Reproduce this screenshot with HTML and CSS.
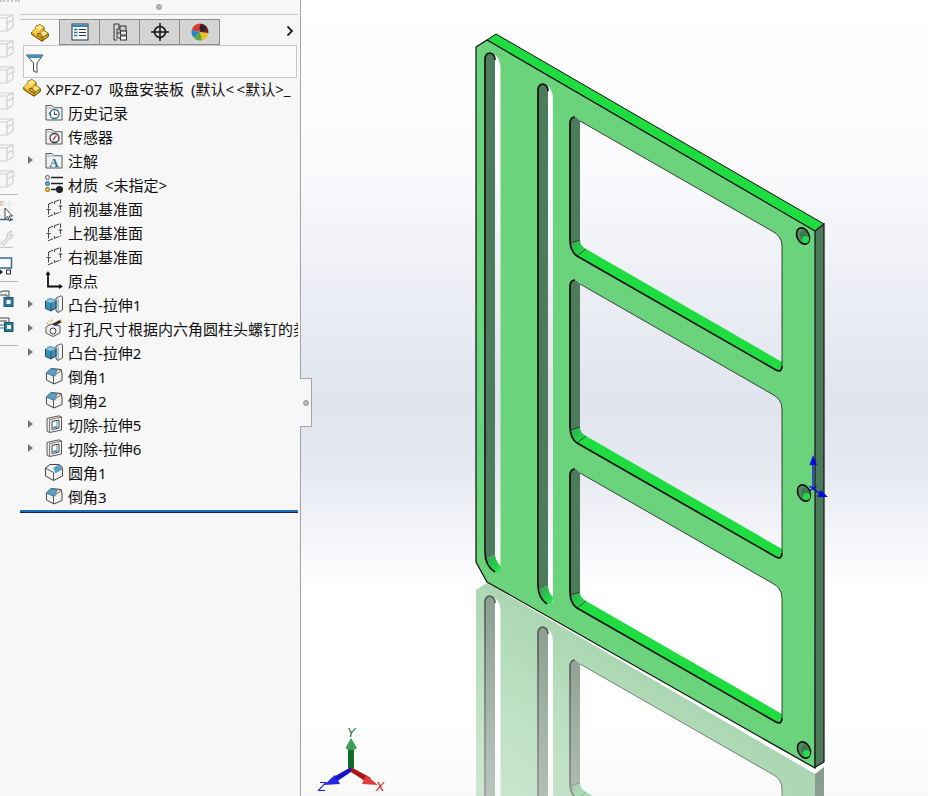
FILE: index.html
```html
<!DOCTYPE html>
<html lang="en">
<head>
  <meta charset="UTF-8">
  <title>XPFZ-07 吸盘安装板</title>
  <link rel="stylesheet" href="styles.css">
</head>
<body>
  <!-- Shared icons -->
  <svg class="defs" width="0" height="0">
    <defs>
      <symbol id="i-part" viewBox="0 0 18 18">
        <path d="M.7 8 5 4V2L9 .7 13 3V6.500L17.300 9.500V12.500L11 17.300.7 10.500Z" fill="#e6aa14" stroke="#5a460a"/>
        <path d="M.7 8 5 4V2L9 .7 13 3 6.500 9.500 6.500 11.500Z" fill="#f5cf55"/>
        <path d="M5 3.500 9 1.500 12 3.300 8.500 6.500Z" fill="#fbe68f"/>
        <path d="M9.500 9.500 13 6.800 16.800 9.600 12 13.200Z" fill="#fbe68f"/>
        <path d="M6.500 9.500V11.500L11 14V17M11 14 17 9.800M6.500 9.500 9.500 9.500 12 13.200" stroke="#5a460a" stroke-width=".8" fill="none"/>
      </symbol>
      <symbol id="i-folder" viewBox="0 0 18 18">
        <path d="M1 4.500V2.500h6l2 2h8V17H1Z" fill="#f1f1f1" stroke="#555"/>
        <path d="M1.500 5h15" stroke="#aaa"/>
      </symbol>
      <symbol id="i-plane" viewBox="0 0 18 18">
        <path d="M3.500 5V18M15.500 .5V13.500" stroke="#444" stroke-dasharray="4.500 1.500" fill="none"/>
        <path d="M3.500 5 15.500 .5M3.500 17.500 15.500 13" stroke="#444" stroke-dasharray="5 1.500" fill="none"/>
        <path d="M1.500 10.500h4M13.500 7h4M9.500 2.500v2.500M9.500 13v2.500" stroke="#444" fill="none"/>
      </symbol>
      <symbol id="i-chamfer" viewBox="0 0 18 18">
        <path d="M1.500 6 6 1.500 16 2.500 17 6V13.500L9 17 1.500 13Z" fill="#f2f2f2" stroke="#444"/>
        <path d="M1.500 6 6 1.500 12.500 3 8.500 9.500Z" fill="#5a9ec4" stroke="#2d5f7d" stroke-width=".6"/>
        <path d="M8.500 9.500V17M8.500 9.500 16.500 3" stroke="#555" fill="none"/>
      </symbol>
      <symbol id="i-fillet" viewBox="0 0 18 18">
        <path d="M.5 5 5 1.500H13Q17.500 2 17.500 7V13L8.500 17.500.5 13Z" fill="#f2f2f2" stroke="#444"/>
        <path d="M8 5 13 2Q17 3 17.300 6.500L10 10.500Q10 7 8 5Z" fill="#5a9ec4"/>
        <path d="M.5 5 8.500 9.500V17.500" stroke="#555" fill="none"/>
      </symbol>
      <symbol id="i-boss" viewBox="0 0 18 18">
        <path d="M11 3 16 .8 17.500 2V15L13 17.500 11 16Z" fill="#f5f5f5" stroke="#555"/>
        <path d="M13 4V17" stroke="#888"/>
        <path d="M.5 6 5 3.500 11 5.500V13L6 16 .5 13.500Z" fill="#3e8fb5" stroke="#1d4f68"/>
        <path d="M.5 6 5 3.500 11 5.500 6 8Z" fill="#8cc6e0"/>
        <path d="M6 8V16" stroke="#1d4f68"/>
      </symbol>
      <symbol id="i-cut" viewBox="0 0 18 18">
        <path d="M2 3.500 14 .8 16.500 2V15L4.500 17.500 2 16Z" fill="#f2f2f2" stroke="#555"/>
        <path d="M4.500 4.800V17.500M4.500 4.800 16.500 2" stroke="#777" fill="none"/>
        <path d="M7 6.500 14 5V13L7 14.500Z" fill="#fff" stroke="#444"/>
        <path d="M11.500 6V11L8 11.800V13.500L12.500 12.800V6Z" fill="#4a93b8"/>
      </symbol>
      <symbol id="i-wire" viewBox="0 0 14 18">
        <path d="M-6 4H7L13 1V13L7 17H-6ZM7 4V17M-6 4-1 1H13M7 9 13 6" fill="none" stroke="#cfcfcf" stroke-width="1.200"/>
      </symbol>
      <linearGradient id="fillet-green" x1="0" y1="0" x2="1" y2="1">
        <stop offset="0" stop-color="#3e9a58"/>
        <stop offset=".6" stop-color="#22d045"/>
        <stop offset="1" stop-color="#2fe857"/>
      </linearGradient>
      <linearGradient id="fade" gradientUnits="userSpaceOnUse" x1="640" y1="670" x2="540" y2="843">
        <stop offset="0" stop-color="#fff" stop-opacity=".72"/>
        <stop offset="1" stop-color="#fff" stop-opacity=".38"/>
      </linearGradient>
      <mask id="reflect-mask" maskUnits="userSpaceOnUse" x="301" y="500" width="627" height="296">
        <rect x="301" y="500" width="627" height="296" fill="url(#fade)"/>
      </mask>

      <g id="win-a">
        <path d="M570 124Q570 117 575 117 578 118 580 121V240L570 243Z" fill="#4c7c5c"/>
        <path d="M570 243 580 240Q580 246 586 249L577 256Q570 251 570 243Z" fill="url(#fillet-green)"/>
        <path d="M586 249 782 362V366Q782 373 776 370L577 256Z" fill="#1fdc40"/>
        <path d="M580 121 772 231Q782 236 782 246V366" class="edge-thin"/>
        <path d="M575 117Q570 117 570 124V240Q570 251 577 256L776 370Q782 373 782 366" class="edge-thick"/>
        <path d="M570 243 580 240M586 249 577 256" class="edge-thin"/>
      </g>
      <g id="win-b">
        <path d="M570 287Q570 280 575 280 578 281 580 284V427L570 430Z" fill="#4c7c5c"/>
        <path d="M570 430 580 427Q580 433 586 436L577 443Q570 438 570 430Z" fill="url(#fillet-green)"/>
        <path d="M586 436 782 549V553Q782 560 776 557L577 443Z" fill="#1fdc40"/>
        <path d="M580 284 772 394Q782 399 782 409V553" class="edge-thin"/>
        <path d="M575 280Q570 280 570 287V427Q570 438 577 443L776 557Q782 560 782 553" class="edge-thick"/>
        <path d="M570 430 580 427M586 436 577 443" class="edge-thin"/>
      </g>
      <!-- side and front of the plate, also used for the floor reflection -->
      <g id="plate-body">
        <path d="M815 231 824 224V762L814 768Z" fill="#4a7a5a"/>
        <path class="face" fill-rule="evenodd" d="M476 47 487 40 815 231 814 768 487 582 476 562Z
          M485 60Q485 53 490 53 500 55 500.500 68V564Q501 574 495 572 485 566 485 552Z
          M538 91Q538 84 543 84 553 86 553 100V598Q553 606 547 604 538 598 538 585Z
          M570 124Q570 117 575 117 578 118 580 121L772 231Q782 236 782 246V366Q782 373 776 370L577 256Q570 251 570 240Z
          M570 287Q570 280 575 280 578 281 580 284L772 394Q782 399 782 409V553Q782 560 776 557L577 443Q570 438 570 427Z
          M570 476Q570 469 575 469 578 470 580 473L772 583Q782 588 782 598V718Q782 725 776 722L577 608Q570 603 570 592Z"/>

        <!-- slot 1 -->
        <path d="M485 60Q485 53 490 53 495 54 495 60V555L486 559Z" fill="#4c7c5c"/>
        <path d="M486 559 495 555Q496 562 501 566 501 574 495 572 487 567 486 559Z" fill="url(#fillet-green)"/>
        <path d="M495 60Q495 54 490 53 485 53 485 60V552Q485 566 495 572" class="edge-thick"/>
        <!-- slot 2 -->
        <path d="M538 91Q538 84 543 84 548 85 548 91V586L538.500 590Z" fill="#4c7c5c"/>
        <path d="M538.500 590 548 586Q549 594 553 597 553 606 547 604 540 600 538.500 590Z" fill="url(#fillet-green)"/>
        <path d="M548 91Q548 85 543 84 538 84 538 91V585Q538 598 547 604" class="edge-thick"/>

        <use href="#win-a"/>
        <use href="#win-b"/>
        <use href="#win-a" transform="translate(0 352)"/>
      </g>
      <g id="screw">
        <ellipse rx="6" ry="8.500" fill="#4f8f62" stroke="#111" stroke-width="1.600" transform="rotate(-25)"/>
        <ellipse cx="1" cy="1" rx="4" ry="6" fill="#3d7a50" transform="rotate(-25)"/>
        <ellipse cx="2.500" cy="3.500" rx="3.500" ry="3.500" fill="#24dd46"/>
      </g>
    </defs>
  </svg>

  <div class="app">
    <div class="sidebar">
      <!-- Command rail, mostly cut off on the left -->
      <div class="rail">
        <svg class="rail-icon" width="14" height="18"><use href="#i-wire"/></svg>
        <svg class="rail-icon" width="14" height="18"><use href="#i-wire"/></svg>
        <svg class="rail-icon" width="14" height="18"><use href="#i-wire"/></svg>
        <svg class="rail-icon" width="14" height="18"><use href="#i-wire"/></svg>
        <svg class="rail-icon" width="14" height="18"><use href="#i-wire"/></svg>
        <svg class="rail-icon" width="14" height="18"><use href="#i-wire"/></svg>
        <svg class="rail-icon" width="14" height="18"><use href="#i-wire"/></svg>
        <div class="rail-sep rail-sep-a"></div>
        <svg class="rail-icon" width="14" height="25" viewBox="0 0 14 25">
          <path d="M0 7H13M0 13H13M0 19H13M4 3V19M9 3V19" stroke="#e2e2e2" fill="none"/>
          <path d="M0 5H3M0 8H2" stroke="#e0803a" fill="none"/>
          <path d="M0 22.500H13" stroke="#2b6f93" stroke-width="1.500"/>
          <path d="M5 11V22L7.500 19.500 9.500 24 11 23.300 9 19H12.500Z" fill="#fff" stroke="#222" stroke-width=".8"/>
        </svg>
        <svg class="rail-icon rail-icon-b" width="14" height="18" viewBox="0 0 14 18">
          <path d="M0 14 7 8Q6 3 10 1.500L12 1.500 9.500 4 11 6 13 4Q13.500 8 9 9.500L3 16" fill="#e6e6e6" stroke="#c4c4c4"/>
          <path d="M0 17.500H13" stroke="#c9c9c9" stroke-width="1.500"/>
        </svg>
        <svg class="rail-icon rail-icon-c" width="14" height="18" viewBox="0 0 14 18">
          <path d="M-3 1H11.500V11H-3" fill="#fff" stroke="#2b6f93" stroke-width="1.500"/>
          <path d="M0 12.500 3 15 0 17.500Z" fill="#222"/>
          <rect x="6.500" y="13" width="4" height="4" fill="#fff" stroke="#333"/>
        </svg>
        <div class="rail-sep rail-sep-b"></div>
        <svg class="rail-icon rail-icon-d" width="14" height="18" viewBox="0 0 14 18">
          <path d="M-2 3 3 1H9V10M-2 5H7V14" fill="#eef3f6" stroke="#444"/>
          <rect x="4" y="7.500" width="9" height="9" fill="#2b7a9c" stroke="#1e566e"/>
          <rect x="6.500" y="10" width="4" height="4" fill="#fff"/>
        </svg>
        <svg class="rail-icon rail-icon-e" width="14" height="18" viewBox="0 0 14 18">
          <path d="M-2 3H9V9M-2 6H7" fill="none" stroke="#444"/>
          <path d="M0 10H4M0 13H4" stroke="#2b7a9c"/>
          <rect x="4.500" y="7.500" width="8.500" height="9" fill="#2b7a9c" stroke="#1e566e"/>
          <rect x="7" y="10" width="4" height="4" fill="#fff"/>
        </svg>
        <div class="rail-sep"></div>
      </div>

      <div class="panel">
        <div class="grip"><span class="dot"></span></div>

        <div class="tabs">
          <div class="tab active">
            <svg width="18" height="18"><use href="#i-part"/></svg>
          </div>
          <div class="tab">
            <svg width="18" height="18" viewBox="0 0 18 18">
              <rect x="1" y="1" width="16" height="16" fill="#f4f8fa" stroke="#333"/>
              <path d="M1 1.500H17V4H1Z" fill="#3b86ad"/>
              <path d="M3 6.500H6.500M3 9.500H6.500M3 12.500H6.500" stroke="#2d7ca6" stroke-width="1.600"/>
              <path d="M8 6.500H15M8 9.500H15M8 12.500H15" stroke="#333"/>
            </svg>
          </div>
          <div class="tab">
            <svg width="18" height="18" viewBox="0 0 18 18">
              <path d="M3 1H8V6H6V15H9M6 10H9" fill="none" stroke="#333"/>
              <path d="M3 1V17H6" fill="none" stroke="#333"/>
              <rect x="9" y="3" width="6" height="5" fill="#cfcfcf" stroke="#333"/>
              <rect x="9.500" y="8" width="6" height="4" fill="#e8e8e8" stroke="#333"/>
              <rect x="9.500" y="13" width="6" height="4" fill="#fff" stroke="#333"/>
            </svg>
          </div>
          <div class="tab">
            <svg width="18" height="18" viewBox="0 0 18 18">
              <circle cx="9" cy="9" r="5.500" fill="none" stroke="#111" stroke-width="1.500"/>
              <path d="M9 0V18M0 9H18" stroke="#111" stroke-width="1.500"/>
            </svg>
          </div>
          <div class="tab">
            <svg width="18" height="18" viewBox="0 0 18 18">
              <circle cx="9" cy="9" r="8.500" fill="#ddd"/>
              <path d="M9 9 9 .5A8.500 8.500 0 0 0 .7 7Z" fill="#d33a2c"/>
              <path d="M9 9 .7 7A8.500 8.500 0 0 0 3 15Z" fill="#2a86c8"/>
              <path d="M9 9 3 15A8.500 8.500 0 0 0 11 17.300Z" fill="#57a83a"/>
              <path d="M9 9 11 17.300A8.500 8.500 0 0 0 17.400 10Z" fill="#f0c020"/>
              <path d="M9 9 17.400 10A8.500 8.500 0 0 0 9 .5Z" fill="#6b1f26"/>
              <path d="M8 5 12 1.500 15 4.500 11 8Z" fill="#222"/>
            </svg>
          </div>
          <svg class="chevron" width="8" height="12" viewBox="0 0 8 12">
            <path d="M1.500 1.500 6 6 1.500 10.500" fill="none" stroke="#222" stroke-width="1.800"/>
          </svg>
        </div>

        <div class="filter">
          <svg width="18" height="19" viewBox="0 0 18 19">
            <path d="M.5 1H17L11 9V18.500L7.500 17V9Z" fill="#fff" stroke="#444"/>
            <path d="M.5 1H17L15 4H2.500Z" fill="#3f93bd"/>
          </svg>
        </div>

        <div class="tree">
          <div class="row root">
            <svg class="icon" width="18" height="18"><use href="#i-part"/></svg>
            <span class="label">XPFZ-07 吸盘安装板 (默认&lt;&#8201;&lt;默认&gt;_</span>
          </div>
          <div class="row">
            <span class="caret none"></span>
            <svg class="icon" width="18" height="18" viewBox="0 0 18 18">
              <use href="#i-folder" width="18" height="18"/>
              <circle cx="9.500" cy="11" r="4.500" fill="#fff" stroke="#2b6f93" stroke-width="1.300"/>
              <path d="M9.500 8.500V11.500H12" stroke="#333" fill="none"/>
              <path d="M3.500 10.500 6 8.500V12.500Z" fill="#2b6f93"/>
            </svg>
            <span class="label">历史记录</span>
          </div>
          <div class="row">
            <span class="caret none"></span>
            <svg class="icon" width="18" height="18" viewBox="0 0 18 18">
              <use href="#i-folder" width="18" height="18"/>
              <circle cx="9.500" cy="11" r="4.500" fill="#fff" stroke="#333" stroke-width="1.300"/>
              <path d="M8 13 11.500 8.500" stroke="#d2402c" stroke-width="1.300"/>
            </svg>
            <span class="label">传感器</span>
          </div>
          <div class="row">
            <span class="caret"></span>
            <svg class="icon" width="18" height="18" viewBox="0 0 18 18">
              <use href="#i-folder" width="18" height="18"/>
              <text x="9" y="16" class="icon-a">A</text>
            </svg>
            <span class="label">注解</span>
          </div>
          <div class="row">
            <span class="caret none"></span>
            <svg class="icon" width="18" height="18" viewBox="0 0 18 18">
              <circle cx="2.500" cy="2.500" r="2" fill="#eee" stroke="#555"/>
              <circle cx="2.500" cy="8.500" r="2" fill="#59a5cf" stroke="#2b6f93"/>
              <circle cx="2.500" cy="14.500" r="2" fill="#eec02a" stroke="#8a6d10"/>
              <path d="M6 2.500H18M6 8.500H18M6 14.500H11" stroke="#222" stroke-width="1.500"/>
              <circle cx="14.500" cy="14.500" r="2.600" fill="none" stroke="#222" stroke-width="2"/>
              <path d="M14.500 10.800V18M11 14.500H18M12 12 17 17M17 12 12 17" stroke="#222"/>
            </svg>
            <span class="label">材质 &lt;未指定&gt;</span>
          </div>
          <div class="row">
            <span class="caret none"></span>
            <svg class="icon" width="18" height="18"><use href="#i-plane"/></svg>
            <span class="label">前视基准面</span>
          </div>
          <div class="row">
            <span class="caret none"></span>
            <svg class="icon" width="18" height="18"><use href="#i-plane"/></svg>
            <span class="label">上视基准面</span>
          </div>
          <div class="row">
            <span class="caret none"></span>
            <svg class="icon" width="18" height="18"><use href="#i-plane"/></svg>
            <span class="label">右视基准面</span>
          </div>
          <div class="row">
            <span class="caret none"></span>
            <svg class="icon" width="18" height="18" viewBox="0 0 18 18">
              <path d="M3 3V15.500H15" fill="none" stroke="#111" stroke-width="1.800"/>
              <path d="M3 0 5.500 4H.5ZM18 15.500 14 18V13Z" fill="#111"/>
            </svg>
            <span class="label">原点</span>
          </div>
          <div class="row">
            <span class="caret"></span>
            <svg class="icon" width="18" height="18"><use href="#i-boss"/></svg>
            <span class="label">凸台-拉伸1</span>
          </div>
          <div class="row">
            <span class="caret"></span>
            <svg class="icon" width="18" height="18" viewBox="0 0 18 18">
              <path d="M1 8 6 5 15 7V14L8 17.500 1 14Z" fill="#eee" stroke="#555"/>
              <circle cx="8" cy="12" r="3" fill="#fff" stroke="#444"/>
              <path d="M7 5 15 .8 17 3 10 7Z" fill="#333"/>
              <path d="M4 1.500 5 3M7 .5V2.500M1.500 4 3.500 4.500" stroke="#e8782a"/>
              <path d="M15 .8 17 3" stroke="#e8c02a" stroke-width="1.500"/>
            </svg>
            <span class="label">打孔尺寸根据内六角圆柱头螺钉的类</span>
          </div>
          <div class="row">
            <span class="caret"></span>
            <svg class="icon" width="18" height="18"><use href="#i-boss"/></svg>
            <span class="label">凸台-拉伸2</span>
          </div>
          <div class="row">
            <span class="caret none"></span>
            <svg class="icon" width="18" height="18"><use href="#i-chamfer"/></svg>
            <span class="label">倒角1</span>
          </div>
          <div class="row">
            <span class="caret none"></span>
            <svg class="icon" width="18" height="18"><use href="#i-chamfer"/></svg>
            <span class="label">倒角2</span>
          </div>
          <div class="row">
            <span class="caret"></span>
            <svg class="icon" width="18" height="18"><use href="#i-cut"/></svg>
            <span class="label">切除-拉伸5</span>
          </div>
          <div class="row">
            <span class="caret"></span>
            <svg class="icon" width="18" height="18"><use href="#i-cut"/></svg>
            <span class="label">切除-拉伸6</span>
          </div>
          <div class="row">
            <span class="caret none"></span>
            <svg class="icon" width="18" height="18"><use href="#i-fillet"/></svg>
            <span class="label">圆角1</span>
          </div>
          <div class="row">
            <span class="caret none"></span>
            <svg class="icon" width="18" height="18"><use href="#i-chamfer"/></svg>
            <span class="label">倒角3</span>
          </div>
        </div>
        <div class="rollback"></div>
      </div>

      <!-- Flyout handle sitting over the panel edge -->
      <div class="handle"><span class="dot"></span></div>
    </div>

    <div class="viewport">
      <svg class="scene" width="627" height="796" viewBox="301 0 627 796">
        <g mask="url(#reflect-mask)">
          <use href="#plate-body" class="reflection" transform="translate(0 543)"/>
        </g>

        <!-- The plate itself -->
        <path d="M487 40 496 34 824 224 815 231Z" fill="#1fdc40" stroke="#111"/>
        <use href="#plate-body"/>
        <path d="M815 231 824 224V762L814 768" class="edge-outline"/>
        <path d="M476 47 487 40 815 231V768L487 582 476 562Z" class="edge-outline"/>

        <use href="#screw" x="803" y="236"/>
        <use href="#screw" x="804" y="493"/>
        <use href="#screw" x="804" y="750"/>

        <!-- Origin marker -->
        <path d="M813 489V463M813 489 821 494M809.500 486 816.500 491M816.500 486 809.500 491" stroke="#0808e0" stroke-width="1.300" fill="none"/>
        <path d="M813 455 817 465H809.500ZM828 497 817.500 497 820.500 490Z" fill="#0808e0"/>

        <!-- View triad -->
        <path d="M348 768V749H354V768L351 770Z" fill="#0e6e2a"/>
        <path d="M351 738 357 748 354 750H348L345.500 748Z" fill="#3c9d58"/>
        <path d="M351 767 330 779 333 784 351 772Z" fill="#1414c8"/>
        <path d="M335 775 324 785 340 784Z" fill="#2626e0"/>
        <path d="M351 767 371 778 368 783 351 772Z" fill="#a81818"/>
        <path d="M366 775 378 785 362 784Z" fill="#e03a3a"/>
        <text x="351" y="737" class="axis axis-y">Y</text>
        <text x="322" y="791" class="axis axis-z">Z</text>
        <text x="380" y="791" class="axis axis-x">X</text>
      </svg>
    </div>
  </div>
</body>
</html>
```

FILE: styles.css
```css
html, body {
  margin: 0;
  height: 100%;
  overflow: hidden;
}
body {
  font-family: "Noto Sans", "Noto Sans CJK SC", sans-serif;
  font-size: 15px;
  color: #111;
}
.defs {
  position: absolute;
}
.app {
  display: flex;
  height: 796px;
}

/* Left side */
.sidebar {
  position: relative;
  display: flex;
  width: 300px;
  flex: none;
  background: #f7f7f7;
  border-right: 1px solid #a3a3a3;
}
.rail {
  width: 20px;
  flex: none;
  padding-top: 12px;
  box-sizing: border-box;
  display: flex;
  flex-direction: column;
  align-items: flex-start;
  border-top: 2px dotted #c4c4c4;
  height: 360px;
}
.rail-icon {
  flex: none;
  margin-bottom: 8px;
}
.rail-icon-b {
  margin-bottom: 9px;
}
.rail-icon-c {
  margin-bottom: 6px;
}
.rail-icon-d {
  margin-bottom: 7px;
}
.rail-icon-e {
  margin-bottom: 12px;
}
.rail-sep {
  flex: none;
  width: 18px;
  height: 1px;
  background: #b5b5b5;
}
.rail-sep-a {
  margin: -2px 0 2px;
}
.rail-sep-b {
  margin-bottom: 8px;
}

.panel {
  width: 278px;
  flex: none;
}
.grip {
  height: 14px;
  border-bottom: 1px solid #c6c6c6;
  display: flex;
  align-items: center;
  justify-content: center;
}
.dot {
  display: block;
  width: 6px;
  height: 6px;
  border-radius: 50%;
  background: #b9b9b9;
  border: 1px solid #9a9a9a;
  box-sizing: border-box;
}
.tabs {
  display: flex;
  align-items: flex-start;
  margin-top: 4px;
  height: 26px;
}
.tab {
  width: 40px;
  height: 26px;
  box-sizing: border-box;
  background: #d4d4d4;
  border: 1px solid #8c8c8c;
  border-left: 0;
  display: flex;
  align-items: center;
  justify-content: center;
}
.tab.active {
  background: #f7f7f7;
  border-bottom: 0;
  border-top-color: #bdbdbd;
}
.chevron {
  margin: 6px 4px 0 auto;
}
.filter {
  margin-left: 3px;
  width: 274px;
  height: 33px;
  box-sizing: border-box;
  border: 1px solid #c8c8c8;
  background: #fafafa;
  display: flex;
  align-items: flex-end;
  padding: 0 0 4px 2px;
}
.tree {
  margin-top: -2px;
}
.row {
  display: flex;
  align-items: center;
  height: 24px;
  padding-left: 5px;
  overflow: hidden;
  white-space: nowrap;
}
.row.root {
  padding-left: 3px;
}
.label {
  word-spacing: 3px;
}
.caret {
  flex: none;
  width: 20px;
  height: 24px;
  position: relative;
}
.caret::before {
  content: "";
  position: absolute;
  left: 3px;
  top: 8px;
  border-left: 5px solid #777;
  border-top: 4px solid transparent;
  border-bottom: 4px solid transparent;
}
.caret.none::before {
  display: none;
}
.icon {
  flex: none;
  margin-right: 5px;
}
.icon-a {
  font-family: "Liberation Serif", serif;
  font-size: 13px;
  font-weight: bold;
  fill: #2b6f93;
  text-anchor: middle;
}
.rollback {
  height: 3px;
  margin-top: 2px;
  background: #1f6fb5;
  border-bottom: 1px solid #12206e;
  box-sizing: border-box;
}
.handle {
  position: absolute;
  left: 300px;
  top: 378px;
  width: 11px;
  height: 47px;
  background: #f7f7f7;
  border: 1px solid #a3a3a3;
  border-left: 0;
  display: flex;
  align-items: center;
  justify-content: center;
}

/* 3D view */
.viewport {
  flex: 1;
  min-width: 0;
  background: linear-gradient(to bottom, #ffffff 0, #fbfbfd 160px, #e0e4ee 400px, #e6e9f1 470px, #ffffff 590px, #ffffff 720px, #f9f9f9 796px);
}
.scene {
  display: block;
}
.face {
  fill: #6bd37c;
}
.edge-outline {
  fill: none;
  stroke: #111;
  stroke-width: 1.200;
}
.edge-thin {
  fill: none;
  stroke: #1a1a1a;
  stroke-width: .8;
}
.edge-thick {
  fill: none;
  stroke: #111;
  stroke-width: 1.700;
}
.reflection {
  filter: saturate(.6) blur(.7px);
}
.axis {
  font-family: "Liberation Sans", sans-serif;
  font-size: 13px;
  font-style: italic;
  text-anchor: middle;
}
.axis-y {
  fill: #0e7a2e;
}
.axis-z {
  fill: #1414e0;
}
.axis-x {
  fill: #d81818;
}
```
